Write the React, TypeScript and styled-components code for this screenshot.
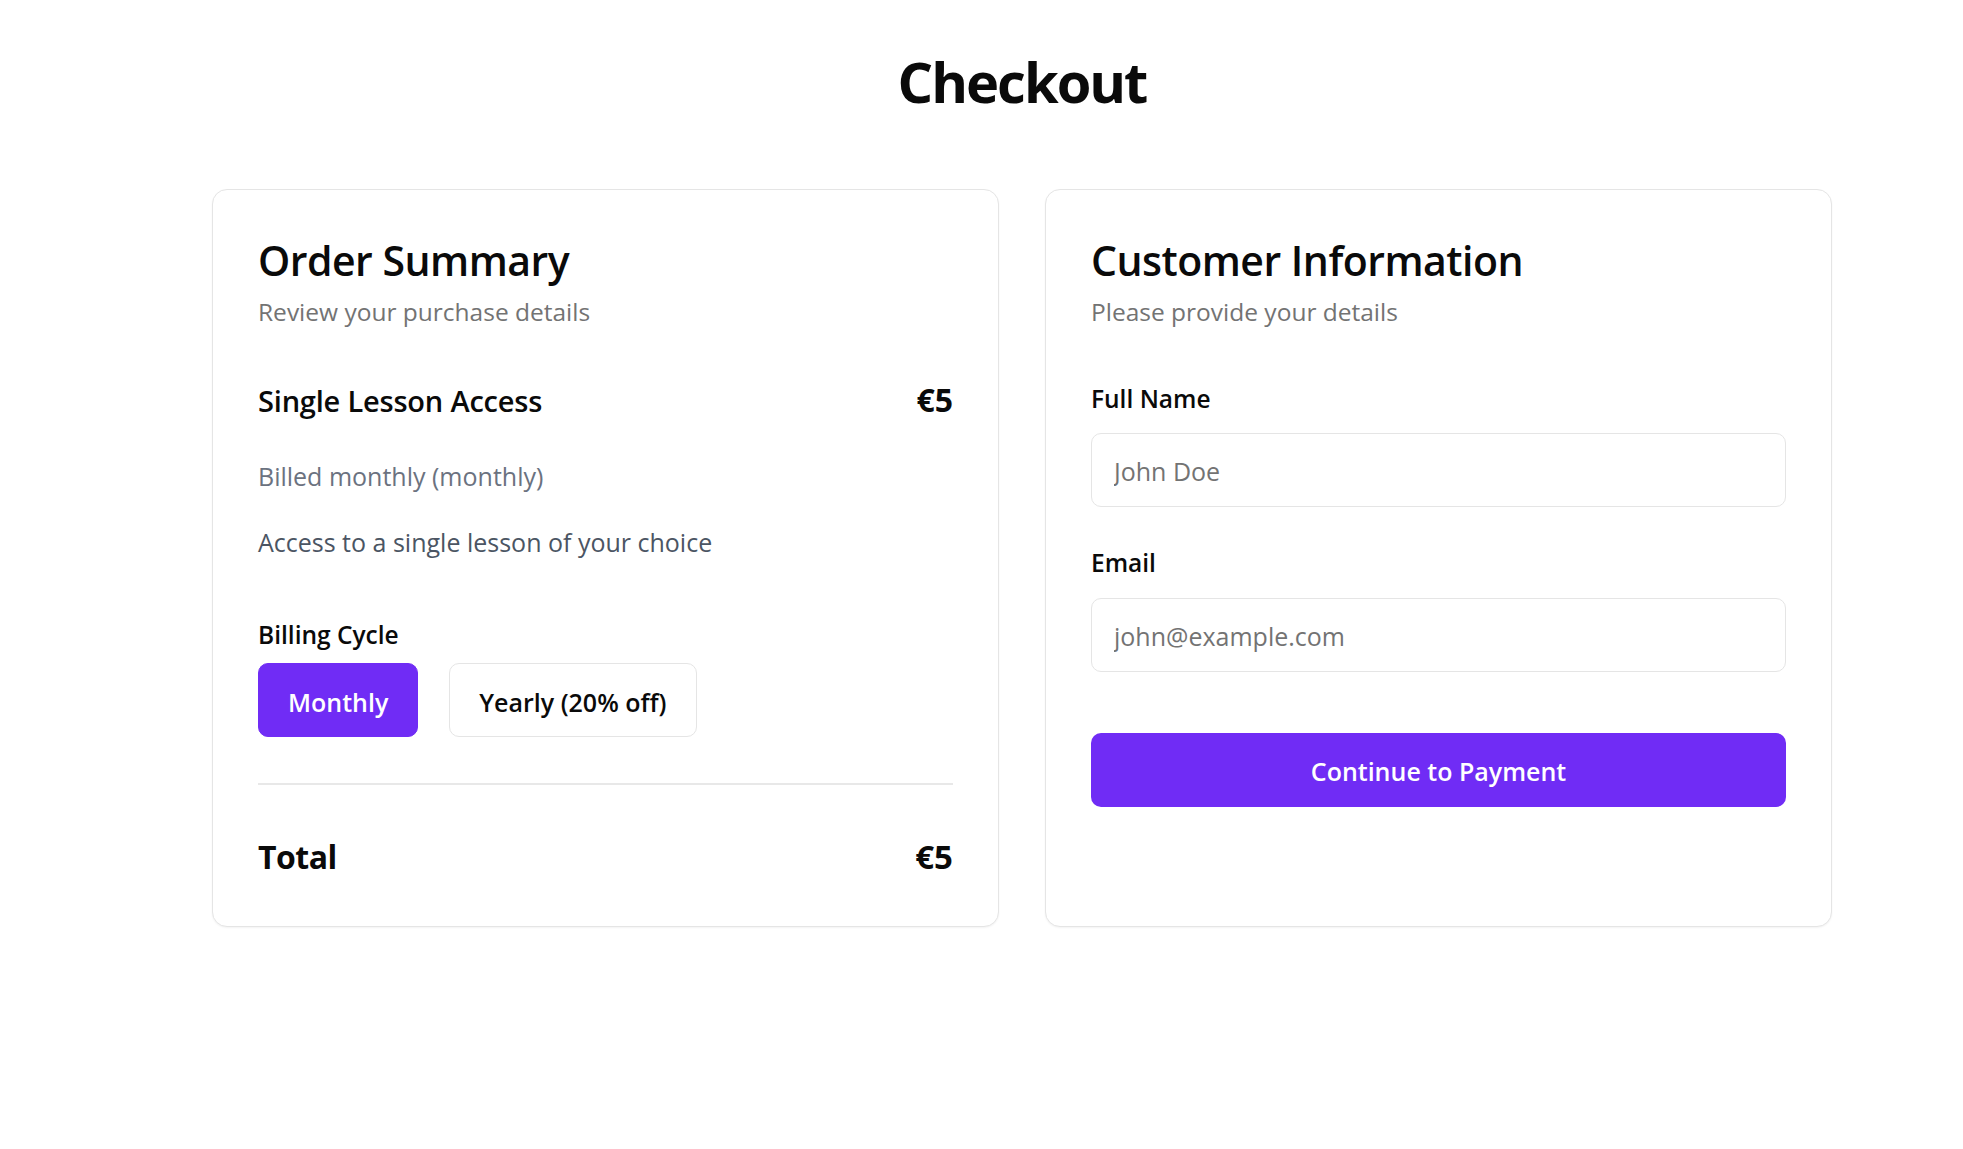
import React from "react";
import styled, { createGlobalStyle } from "styled-components";

const GlobalStyle = createGlobalStyle`
  html, body {
    margin: 0;
    padding: 0;
    background: #ffffff;
  }
  body {
    font-family: "Open Sans", "Noto Sans", "Liberation Sans", sans-serif;
    color: #0a0a0a;
  }
  * { box-sizing: border-box; }
`;

const Page = styled.main`
  padding: 47px 131px 80px 212px;
`;

const Title = styled.h1`
  margin: 0 0 74px;
  text-align: center;
  font-size: 56px;
  line-height: 68px;
  font-weight: 700;
  letter-spacing: -2px;
  color: #0a0a0a;
`;

const Grid = styled.div`
  display: grid;
  grid-template-columns: 1fr 1fr;
  gap: 46px;
`;

const Card = styled.section`
  display: flex;
  flex-direction: column;
  background: #ffffff;
  border: 1px solid #e5e5e5;
  border-radius: 15px;
  box-shadow: 0 1px 2px rgba(0, 0, 0, 0.05);
  padding: 44px 45px 49px 45px;
`;

const CardTitle = styled.h2`
  margin: 0;
  font-size: 41px;
  line-height: 52px;
  font-weight: 600;
  letter-spacing: -0.5px;
  color: #0a0a0a;
`;

const CardSubtitle = styled.p`
  margin: 8px 0 0;
  font-size: 24.5px;
  line-height: 36px;
  color: #737373;
`;

const Row = styled.div<{ $top: number; $size: number; $lh: number }>`
  display: flex;
  justify-content: space-between;
  align-items: baseline;
  margin-top: ${(p) => p.$top}px;
  font-size: ${(p) => p.$size}px;
  line-height: ${(p) => p.$lh}px;
`;

const ItemName = styled.span`
  font-weight: 600;
  letter-spacing: -0.2px;
`;

const Price = styled.span<{ $size: number }>`
  font-size: ${(p) => p.$size}px;
  font-weight: 700;
`;

const TotalLabel = styled.span`
  font-weight: 700;
  letter-spacing: -0.5px;
`;

const Detail = styled.p<{ $top: number; $tone: string }>`
  margin: ${(p) => p.$top}px 0 0;
  font-size: 25px;
  line-height: 36px;
  color: ${(p) => p.$tone};
`;

const Label = styled.label<{ $top: number }>`
  display: block;
  margin-top: ${(p) => p.$top}px;
  font-size: 24.5px;
  line-height: 32px;
  font-weight: 600;
  color: #0a0a0a;
`;

const ToggleGroup = styled.div`
  display: flex;
  gap: 31px;
  margin-top: 12px;
`;

const Toggle = styled.button<{ $active?: boolean }>`
  height: 74px;
  padding: 3px 29px 0;
  border-radius: 10px;
  font-family: inherit;
  font-size: 25px;
  font-weight: 600;
  cursor: pointer;
  border: 1px solid ${(p) => (p.$active ? "#702cf5" : "#e5e5e5")};
  background: ${(p) => (p.$active ? "#702cf5" : "#ffffff")};
  color: ${(p) => (p.$active ? "#ffffff" : "#0a0a0a")};
`;

const Divider = styled.hr`
  margin: 46px 0 0;
  border: 0;
  height: 2px;
  background: #e8e8e8;
`;

const Input = styled.input<{ $top: number }>`
  display: block;
  width: 100%;
  height: 74px;
  margin-top: ${(p) => p.$top}px;
  padding: 2px 22px 0;
  border: 1px solid #e5e5e5;
  border-radius: 10px;
  font-family: inherit;
  font-size: 25px;
  color: #0a0a0a;
  background: #ffffff;
  outline: none;
  &::placeholder {
    color: #737373;
  }
`;

const SubmitButton = styled.button`
  width: 100%;
  height: 74px;
  margin-top: 61px;
  padding: 2px 0 0;
  border: 0;
  border-radius: 10px;
  background: #702cf5;
  color: #ffffff;
  font-family: inherit;
  font-size: 25px;
  font-weight: 600;
  cursor: pointer;
`;

export default function App() {
  const [cycle, setCycle] = React.useState<"monthly" | "yearly">("monthly");
  return (
    <>
      <GlobalStyle />
      <Page>
        <Title>Checkout</Title>
        <Grid>
          <Card>
            <CardTitle>Order Summary</CardTitle>
            <CardSubtitle>Review your purchase details</CardSubtitle>
            <Row $top={50} $size={29} $lh={40}>
              <ItemName>Single Lesson Access</ItemName>
              <Price $size={32}>€5</Price>
            </Row>
            <Detail $top={37} $tone="#6b7280">Billed monthly (monthly)</Detail>
            <Detail $top={30} $tone="#4b5563">Access to a single lesson of your choice</Detail>
            <Label $top={59}>Billing Cycle</Label>
            <ToggleGroup>
              <Toggle $active={cycle === "monthly"} onClick={() => setCycle("monthly")}>
                Monthly
              </Toggle>
              <Toggle $active={cycle === "yearly"} onClick={() => setCycle("yearly")}>
                Yearly (20% off)
              </Toggle>
            </ToggleGroup>
            <Divider />
            <Row $top={52} $size={32} $lh={40}>
              <TotalLabel>Total</TotalLabel>
              <Price $size={33}>€5</Price>
            </Row>
          </Card>
          <Card>
            <CardTitle>Customer Information</CardTitle>
            <CardSubtitle>Please provide your details</CardSubtitle>
            <Label $top={53} htmlFor="fullName">Full Name</Label>
            <Input $top={18} id="fullName" placeholder="John Doe" />
            <Label $top={40} htmlFor="email">Email</Label>
            <Input $top={19} id="email" type="email" placeholder="john@example.com" />
            <SubmitButton>Continue to Payment</SubmitButton>
          </Card>
        </Grid>
      </Page>
    </>
  );
}
